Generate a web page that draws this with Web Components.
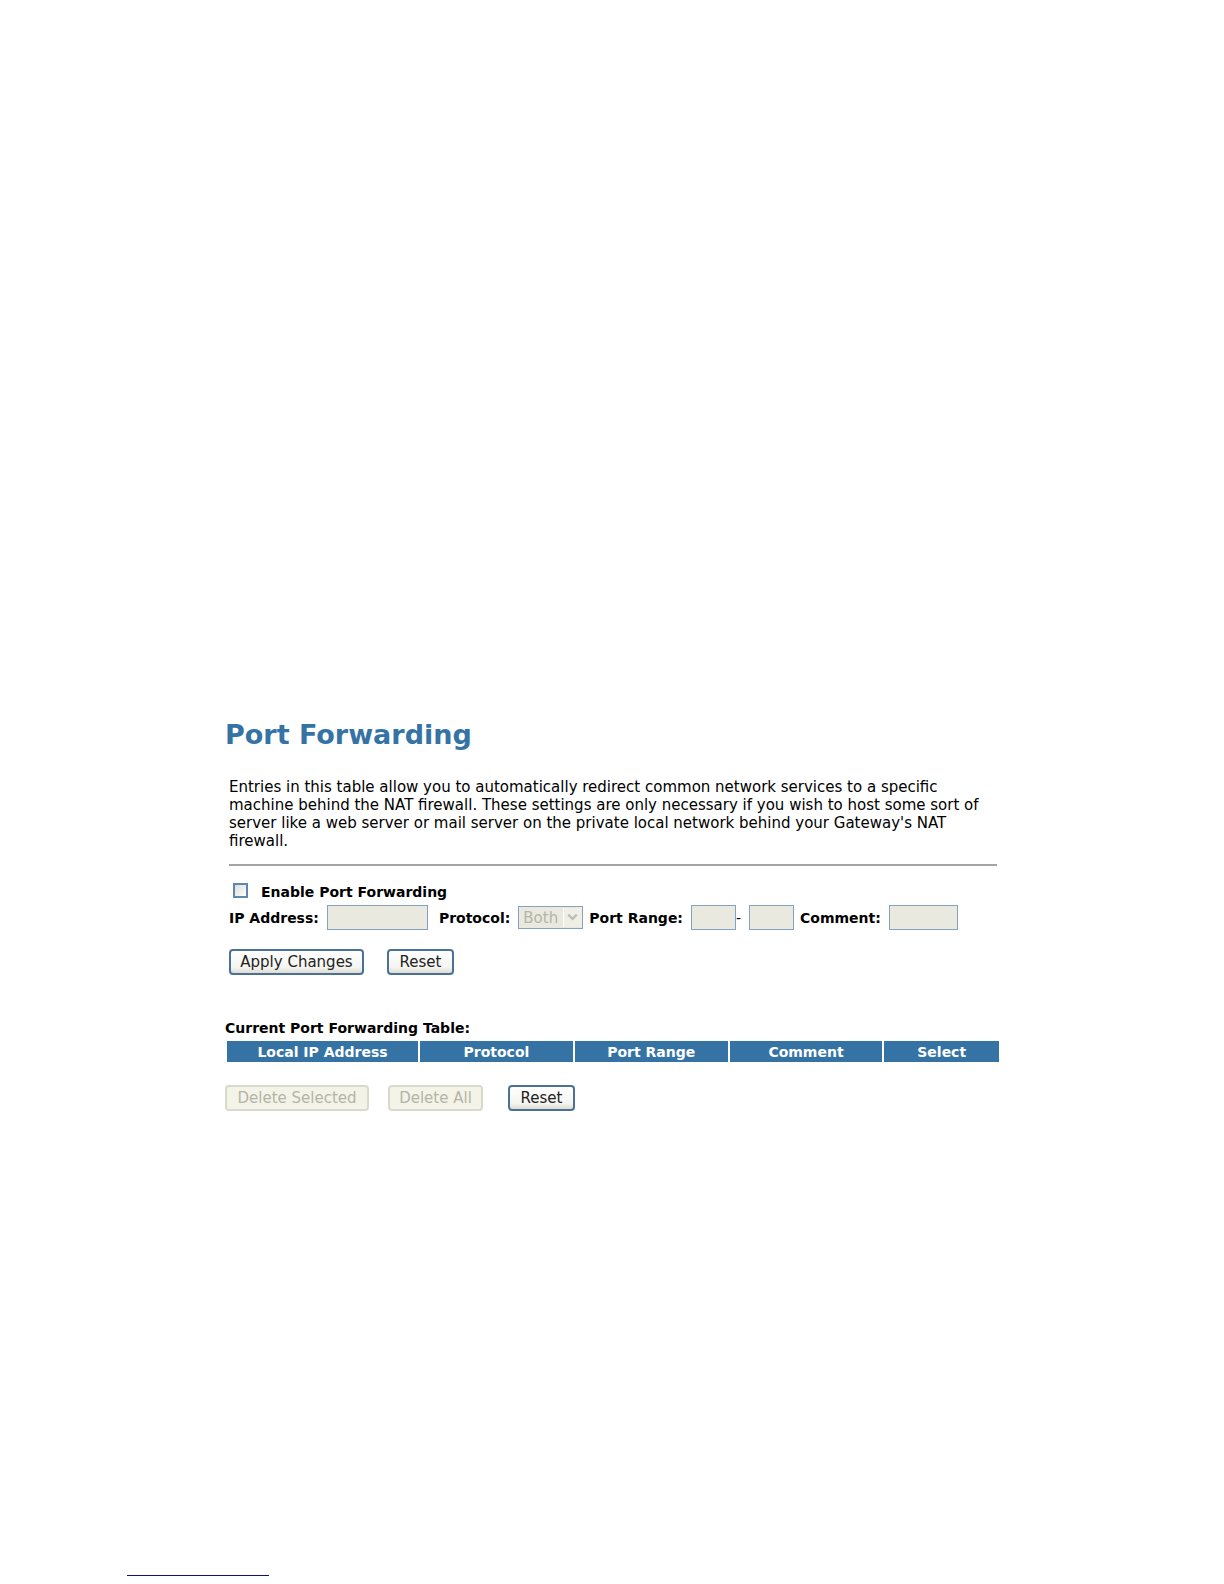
<!DOCTYPE html>
<html lang="en">
<head>
<meta charset="utf-8">
<title>Port Forwarding</title>
<style>
body { margin: 0; background: #fff; color: #000; font: 15px/18px "DejaVu Sans", sans-serif; }
</style>
</head>
<body>
<port-forwarding-page></port-forwarding-page>
<script>
const attach = (el, html) => {
  const t = document.createElement('template');
  t.innerHTML = html;
  el.attachShadow({ mode: 'open' }).append(t.content.cloneNode(true));
};

class XpButton extends HTMLElement {
  connectedCallback() {
    if (this.shadowRoot) return;
    attach(this, `<style>
      :host { display: block; width: var(--w, 67px); }
      button { box-sizing: border-box; display: block; width: 100%; height: 26px; padding: 0; white-space: nowrap;
        font: inherit; color: #222; border: 2px solid #4a7299; border-radius: 4px;
        background: linear-gradient(#fff, #f4f4f0 75%, #dedbd0); }
      button:disabled { color: #b5b5a6; border-color: #dadacc; background: #f3f3e8; }
    </style><button type="button"><slot></slot></button>`);
    this.shadowRoot.querySelector('button').disabled = this.hasAttribute('disabled');
  }
}
customElements.define('xp-button', XpButton);

class XpField extends HTMLElement {
  connectedCallback() {
    if (this.shadowRoot) return;
    const control = this.hasAttribute('options')
      ? `<span class="pick"><select id="c" disabled><option>${this.getAttribute('options')}</option></select>
         <svg viewBox="0 0 20 20" aria-hidden="true"><rect width="20" height="20" fill="#efefe8"/><path d="M.5 0v20" stroke="#fff"/><path d="M5.500 7l4.500 4.500L14.500 7" fill="none" stroke="#bdbdb0" stroke-width="2.400"/></svg></span>`
      : '<input id="c" type="text" disabled>';
    attach(this, `<style>
      :host { display: flex; align-items: center; gap: 8px; }
      label { font-size: 14px; font-weight: bold; white-space: nowrap; }
      label.dash { font-weight: normal; }
      input, select { box-sizing: border-box; width: var(--w, 45px); height: 25px; margin: 0; padding: 0 4px;
        border: 1px solid #84a3c4; border-radius: 0; background: #e9e9e0; color: #b5b5a6; font: inherit; }
      select { appearance: none; height: 23px; opacity: 1; display: block; }
      .pick { display: grid; grid-template-columns: 1fr 20px; align-items: center; }
      .pick > select { grid-area: 1 / 1 / 2 / 3; }
      .pick > svg { grid-area: 1 / 2; width: 19px; height: 19px; pointer-events: none; }
    </style><label for="c"><slot></slot></label>${control}`);
    if (this.hasAttribute('dash')) this.shadowRoot.querySelector('label').className = 'dash';
  }
}
customElements.define('xp-field', XpField);

class XpCheck extends HTMLElement {
  connectedCallback() {
    if (this.shadowRoot) return;
    attach(this, `<style>
      :host { display: flex; align-items: flex-start; gap: 13px; padding-left: 4px; font-size: 14px; font-weight: bold; }
      input { appearance: none; box-sizing: border-box; width: 15px; height: 15px; margin: 0;
        border: 2px solid #5e88ae; background: linear-gradient(135deg, #dcdcd7, #fff); }
    </style><input id="c" type="checkbox"><label for="c"><slot></slot></label>`);
  }
}
customElements.define('xp-check', XpCheck);

class ForwardingTable extends HTMLElement {
  connectedCallback() {
    if (this.shadowRoot) return;
    attach(this, `<style>
      :host { display: block; font-size: 14px; }
      table { width: 100%; table-layout: fixed; border-collapse: separate; border-spacing: 2px; }
      caption { padding-bottom: 2px; text-align: left; font-weight: bold; }
      th { height: 21px; padding: 0; box-sizing: border-box; background: #3573a5; color: #fff; line-height: 18px; }
      .wide { width: 25%; } .mid { width: 20%; }
    </style><table><caption>Current Port Forwarding Table:</caption>
    <thead><tr><th class="wide">Local IP Address</th><th class="mid">Protocol</th><th class="mid">Port Range</th><th class="mid">Comment</th><th>Select</th></tr></thead></table>`);
  }
}
customElements.define('forwarding-table', ForwardingTable);

class PortForwardingPage extends HTMLElement {
  connectedCallback() {
    if (this.shadowRoot) return;
    attach(this, `<style>
      :host { display: block; }
      main { padding: 718px 223px 0 225px; }
      h1 { margin: 0; font-size: 27px; line-height: 34px; color: #3573a5; }
      .setup { padding: 0 4px; }
      p { margin: 26px 0 14px; white-space: nowrap; }
      hr { margin: 0; border: 0; border-top: 2px solid #a4a4a4; }
      xp-check { margin-top: 17px; }
      .row { display: flex; align-items: center; }
      .fields { gap: 6px; margin-top: 4px; }
      .fields .ip { margin-right: 5px; }
      .actions { gap: 23px; margin-top: 19px; }
      forwarding-table { margin-top: 44px; }
      .delete { gap: 19px; margin-top: 21px; }
      .delete .last { margin-left: 6px; }
      footer { padding: 464px 0 8px 127px; }
      footer a { display: block; width: 142px; height: 1px; background: #11116f; }
    </style>
    <main>
      <h1>Port Forwarding</h1>
      <section class="setup">
        <p>Entries in this table allow you to automatically redirect common network services to a specific<br>machine behind the NAT firewall. These settings are only necessary if you wish to host some sort of<br>server like a web server or mail server on the private local network behind your Gateway's NAT<br>firewall.</p>
        <hr>
        <xp-check>Enable Port Forwarding</xp-check>
        <div class="row fields">
          <xp-field class="ip" style="--w:101px">IP Address:</xp-field>
          <xp-field options="Both" style="--w:65px">Protocol:</xp-field>
          <div class="row"><xp-field>Port Range:</xp-field><xp-field dash>-</xp-field></div>
          <xp-field style="--w:69px">Comment:</xp-field>
        </div>
        <div class="row actions">
          <xp-button style="--w:135px">Apply Changes</xp-button>
          <xp-button>Reset</xp-button>
        </div>
      </section>
      <forwarding-table></forwarding-table>
      <div class="row delete">
        <xp-button disabled style="--w:144px">Delete Selected</xp-button>
        <xp-button disabled style="--w:95px">Delete All</xp-button>
        <xp-button class="last">Reset</xp-button>
      </div>
    </main>
    <footer><a href="#" aria-label="Footer link"></a></footer>`);
  }
}
customElements.define('port-forwarding-page', PortForwardingPage);
</script>
</body>
</html>
